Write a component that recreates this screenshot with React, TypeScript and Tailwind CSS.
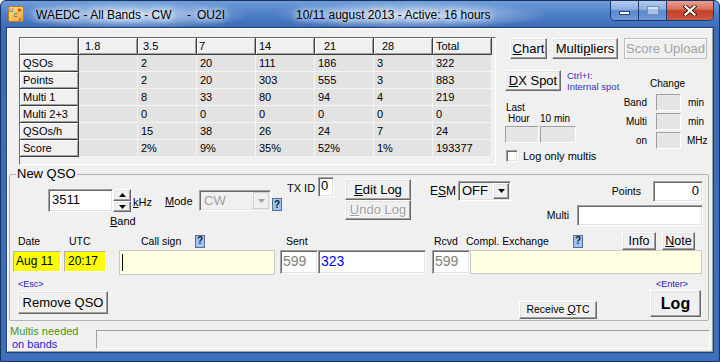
import React from "react";

const raised =
  "border border-t-white border-l-white border-r-[#696969] border-b-[#696969] shadow-[inset_-1px_-1px_0_#a0a0a0,inset_1px_1px_0_#e3e3e3] bg-[#f0f0f0]";
const sunken =
  "border border-t-[#a0a0a0] border-l-[#a0a0a0] border-r-white border-b-white shadow-[inset_1px_1px_0_#696969,inset_-1px_-1px_0_#e3e3e3]";
const flatBox =
  "border border-t-[#a0a0a0] border-l-[#a0a0a0] border-r-white border-b-white bg-[#e6e6e6]";

function Btn({ className = "", children }: { className?: string; children?: React.ReactNode }) {
  return <div className={`${raised} flex items-center justify-center whitespace-nowrap ${className}`}>{children}</div>;
}

function Q({ className = "" }: { className?: string }) {
  return (
    <div
      className={`w-[10px] h-[13px] bg-[#9fc5f0] border border-[#5a6f8c] flex items-center justify-center text-[10px] font-bold leading-none text-[#10204a] ${className}`}
    >
      ?
    </div>
  );
}

function Arrow({ down = true, color = "#000" }: { down?: boolean; color?: string }) {
  return (
    <svg width="7" height="4" viewBox="0 0 7 4">
      <path d={down ? "M0 0 L7 0 L3.5 4Z" : "M0 4 L7 4 L3.5 0Z"} fill={color} />
    </svg>
  );
}

const cols = ["", "1.8", "3.5", "7", "14", "21", "28", "Total"];
const headPad = ["pl-[3px]", "pl-[6px]", "pl-[5px]", "pl-[2px]", "pl-[3px]", "pl-[9px]", "pl-[8px]", "pl-[3px]"];
const rows: [string, string[]][] = [
  ["QSOs", ["", "2", "20", "111", "186", "3", "322"]],
  ["Points", ["", "2", "20", "303", "555", "3", "883"]],
  ["Multi 1", ["", "8", "33", "80", "94", "4", "219"]],
  ["Multi 2+3", ["", "0", "0", "0", "0", "0", "0"]],
  ["QSOs/h", ["", "15", "38", "26", "24", "7", "24"]],
  ["Score", ["", "2%", "9%", "35%", "52%", "1%", "193377"]],
];

const headCell =
  "h-[17px] flex items-center border-r border-b border-r-[#404040] border-b-[#404040] shadow-[inset_1px_1px_0_#fff,inset_-1px_-1px_0_#a0a0a0] bg-[#f0f0f0] whitespace-nowrap overflow-hidden";
const dataCell =
  "h-[17px] flex items-center pl-[3px] border-r border-b border-[#f4f4f4] bg-[#e3e3e3] whitespace-nowrap overflow-hidden";

function ScoreTable() {
  return (
    <div className="w-[477px] h-[128px] border border-t-[#696969] border-l-[#696969] border-r-white border-b-white bg-[#f0f0f0]">
      <div className="grid grid-cols-[repeat(8,59px)] text-[11px] leading-[13px] text-black">
        {cols.map((c, i) => (
          <div key={"h" + i} className={`${headCell} ${headPad[i]}`}>
            {c}
          </div>
        ))}
        {rows.map(([label, vals]) => (
          <React.Fragment key={label}>
            <div className={`${headCell} pl-[3px]`}>{label}</div>
            {vals.map((v, j) => (
              <div key={j} className={dataCell}>
                {v}
              </div>
            ))}
          </React.Fragment>
        ))}
      </div>
    </div>
  );
}

function RightPanel() {
  return (
    <div className="ml-[9px] pt-[1px] flex flex-col">
      <div className="flex h-[21px]">
        <Btn className="ml-[5px] w-[37px] h-[21px] text-[13px]">
          <span className="underline">C</span>hart
        </Btn>
        <Btn className="ml-[5px] w-[66px] h-[21px] text-[13px]">
          Multi<span className="underline">p</span>liers
        </Btn>
        <div className="ml-[6px] w-[83px] h-[21px] border border-[#bdbdbd] shadow-[inset_1px_1px_0_#fff] flex items-center justify-center text-[13px] text-[#a3a3a3] whitespace-nowrap">
          Score Upload
        </div>
      </div>
      <div className="flex mt-[11px]">
        <div className="w-[115px] flex flex-col">
          <div className="flex h-[21px]">
            <Btn className="w-[56px] h-[21px] text-[13px]">
              <span className="underline">D</span>X Spot
            </Btn>
            <div className="ml-[6px] text-[9.5px] leading-[11px] text-[#3a32c0] whitespace-nowrap">
              <div>Ctrl+I:</div>
              <div>Internal spot</div>
            </div>
          </div>
          <div className="mt-[11px] ml-[1px] text-[10px] leading-[11px]">Last</div>
          <div className="flex text-[10px] leading-[11px]">
            <span className="ml-[3px] w-[32px]">Hour</span>
            <span>10 min</span>
          </div>
          <div className="flex mt-[2px]">
            <div className={`${flatBox} w-[34px] h-[17px]`} />
            <div className={`${flatBox} ml-[1px] w-[36px] h-[17px]`} />
          </div>
          <div className="flex items-center mt-[7px] h-[12px]">
            <div className={`${sunken} bg-white ml-[1px] w-[12px] h-[12px]`} />
            <span className="ml-[5px] text-[11px] leading-[12px] whitespace-nowrap">Log only multis</span>
          </div>
        </div>
        <div className="flex flex-col text-[10px] leading-[12px]">
          <span className="ml-[30px] mt-[8px]">Change</span>
          <div className="flex items-center h-[17px] mt-[4px]">
            <span className="w-[27px] text-right">Band</span>
            <div className={`${flatBox} ml-[9px] w-[25px] h-[17px]`} />
            <span className="ml-[7px]">min</span>
          </div>
          <div className="flex items-center h-[17px] mt-[2px]">
            <span className="w-[27px] text-right">Multi</span>
            <div className={`${flatBox} ml-[9px] w-[25px] h-[17px]`} />
            <span className="ml-[7px]">min</span>
          </div>
          <div className="flex items-center h-[17px] mt-[2px]">
            <span className="w-[27px] text-right">on</span>
            <div className={`${flatBox} ml-[9px] w-[25px] h-[17px]`} />
            <span className="ml-[6px]">MHz</span>
          </div>
        </div>
      </div>
    </div>
  );
}

function NewQso() {
  return (
    <fieldset className="ml-[1px] w-[700px] h-[154px] border border-[#b4b4b4] rounded-[2px] px-0 pb-[1px]">
      <legend className="ml-[6px] px-[1px] text-[13px] leading-[14px]">New QSO</legend>
      {/* Row A */}
      <div className="flex items-start h-[51px] -mt-[4px]">
        <div className="ml-[38px] mt-[12px] flex flex-col">
          <div className="flex items-center">
            <div className={`${sunken} bg-white w-[65px] h-[23px] text-[13px] leading-[20px] pl-[3px]`}>3511</div>
            <div className="flex flex-col w-[18px] h-[23px]">
              <div className={`${raised} h-[12px] flex items-center justify-center`}>
                <Arrow down={false} />
              </div>
              <div className={`${raised} h-[11px] flex items-center justify-center`}>
                <Arrow />
              </div>
            </div>
            <span className="ml-[2px] w-[20px] text-[11px] leading-[13px] pt-[3px]">
              <span className="underline">k</span>Hz
            </span>
          </div>
          <span className="ml-[62px] mt-[3px] text-[11px] leading-[13px]">
            <span className="underline">B</span>and
          </span>
        </div>
        <span className="ml-[12px] mt-[18px] w-[28px] text-[11px] leading-[13px]">
          <span className="underline">M</span>ode
        </span>
        <div className={`ml-[6px] mt-[13px] w-[72px] h-[21px] ${sunken} bg-[#f0f0f0] flex p-[1px]`}>
          <span className="flex-1 pl-[3px] text-[13px] leading-[17px] text-[#a0a0a0]">CW</span>
          <div className="w-[16px] h-full border border-[#d0d0d0] bg-[#f0f0f0] flex items-center justify-center">
            <Arrow color="#a0a0a0" />
          </div>
        </div>
        <Q className="ml-[1px] mt-[21px]" />
        <span className="ml-[5px] mt-[5px] w-[27px] text-[11px] leading-[13px] whitespace-nowrap">TX ID</span>
        <div className={`ml-[4px] w-[16px] h-[20px] ${sunken} bg-white text-[13px] leading-[16px] pl-[2px]`}>0</div>
        <div className="ml-[11px] mt-[2px] flex flex-col">
          <Btn className="w-[66px] h-[21px] text-[13px]">
            <span className="underline">E</span>dit Log
          </Btn>
          <Btn className="w-[66px] h-[20px] text-[13px] text-[#a0a0a0] [text-shadow:1px_1px_0_#fff]">
            <span className="underline">U</span>ndo Log
          </Btn>
        </div>
        <span className="ml-[19px] mt-[8px] w-[26px] text-[12px] leading-[13px]">
          E<span className="underline">S</span>M
        </span>
        <div className={`ml-[2px] mt-[4px] w-[53px] h-[20px] ${sunken} bg-[#f0f0f0] flex p-[1px]`}>
          <span className="flex-1 pl-[2px] text-[13px] leading-[16px]">OFF</span>
          <div className={`${raised} w-[16px] h-full flex items-center justify-center`}>
            <Arrow />
          </div>
        </div>
        <div className="ml-auto mr-[5px] mt-[4px] flex flex-col items-end gap-[3px]">
          <div className="flex items-center">
            <span className="text-[10.5px] mr-[12px]">Points</span>
            <div className={`${sunken} bg-white w-[50px] h-[21px] text-[13px] text-right pr-[3px] leading-[18px]`}>0</div>
          </div>
          <div className="flex items-center">
            <span className="text-[10.5px] mr-[8px]">Multi</span>
            <div className={`${sunken} bg-white w-[126px] h-[21px]`} />
          </div>
        </div>
      </div>
      {/* Row B labels */}
      <div className="flex items-center h-[18px] mt-[4px] text-[10.5px] leading-[13px] whitespace-nowrap">
        <span className="ml-[8px] w-[51px]">Date</span>
        <span className="w-[72px]">UTC</span>
        <span className="w-[54px]">Call sign</span>
        <Q />
        <span className="ml-[81px] w-[148px]">Sent</span>
        <span className="w-[32px]">Rcvd</span>
        <span className="w-[107px]">Compl. Exchange</span>
        <Q />
        <Btn className="ml-[39px] w-[34px] h-[18px] text-[12.5px]">Info</Btn>
        <Btn className="ml-[6px] w-[33px] h-[18px] text-[12.5px]">
          <span className="underline">N</span>ote
        </Btn>
      </div>
      {/* Row C fields */}
      <div className="flex items-start h-[25px]">
        <div className="ml-[3px] mt-[1px] w-[48px] h-[21px] bg-[#ffff00] border border-t-[#b0b0b0] border-l-[#b0b0b0] border-r-white border-b-white text-[12px] leading-[18px] pl-[2px]">
          Aug 11
        </div>
        <div className="ml-[3px] mt-[1px] w-[42px] h-[21px] bg-[#ffff00] border border-t-[#b0b0b0] border-l-[#b0b0b0] border-r-white border-b-white text-[12px] leading-[18px] pl-[3px]">
          20:17
        </div>
        <div className="ml-[13px] w-[156px] h-[25px] bg-[#ffffe1] border border-[#c8c8c8] flex items-center pl-[2px]">
          <div className="w-[1px] h-[17px] bg-black" />
        </div>
        <div className={`ml-[5px] w-[38px] h-[24px] ${sunken} bg-white text-[14px] leading-[21px] pl-[2px] text-[#808080]`}>599</div>
        <div className={`w-[108px] h-[24px] ${sunken} bg-white text-[14px] leading-[21px] pl-[2px] text-[#0000ff]`}>323</div>
        <div className={`ml-[6px] w-[38px] h-[24px] ${sunken} bg-white text-[14px] leading-[21px] pl-[2px] text-[#808080]`}>599</div>
        <div className="w-[232px] h-[24px] bg-[#ffffe1] border border-[#c8c8c8]" />
      </div>
      {/* Row D */}
      <div className="flex items-start h-[41px] mt-[3px]">
        <div className="ml-[8px] flex flex-col">
          <span className="text-[9px] leading-[13px] text-[#2020b8]">&lt;Esc&gt;</span>
          <Btn className="w-[90px] h-[23px] text-[13px]">Remove QSO</Btn>
        </div>
        <Btn className="ml-[411px] mt-[23px] w-[78px] h-[18px] text-[10.5px]">
          Receive <span className="underline ml-[3px]">Q</span>TC
        </Btn>
        <div className="ml-[53px] flex flex-col">
          <span className="pl-[6px] text-[9px] leading-[12px] text-[#2020b8]">&lt;Enter&gt;</span>
          <Btn className="w-[51px] h-[27px] text-[16px] font-bold">Log</Btn>
        </div>
      </div>
    </fieldset>
  );
}

function TitleIcon() {
  return (
    <svg width="16" height="16" viewBox="0 0 16 16">
      <defs>
        <linearGradient id="ig" x1="0" y1="0" x2="1" y2="1">
          <stop offset="0" stopColor="#ffe680" />
          <stop offset="1" stopColor="#f0a030" />
        </linearGradient>
      </defs>
      <rect x="0.5" y="0.5" width="15" height="15" rx="2" fill="url(#ig)" stroke="#c07818" />
      <circle cx="11.5" cy="4" r="1.6" fill="#e03020" />
      <text x="1" y="6" fontSize="5.5" fill="#2b3aa8" fontFamily="Liberation Sans, Arial, sans-serif" fontStyle="italic">U</text>
      <text x="5.5" y="10.5" fontSize="5.5" fill="#2b3aa8" fontFamily="Liberation Sans, Arial, sans-serif" fontStyle="italic">C</text>
      <text x="10.5" y="15" fontSize="5.5" fill="#6a2aa8" fontFamily="Liberation Sans, Arial, sans-serif" fontStyle="italic">x</text>
    </svg>
  );
}

function CaptionButtons() {
  return (
    <div className="ml-auto mr-[5px] -mt-[1px] flex h-[21px] border border-t-0 border-[#1d3b70] rounded-b-[5px] overflow-hidden">
      <div className="w-[28px] h-full border-r border-[#1d3b70] [background-image:linear-gradient(180deg,#b9cfee_0%,#8fb0e0_45%,#5d89cb_55%,#6e98d6_100%)] flex items-center justify-center">
        <div className="mt-[5px] w-[11px] h-[4px] bg-white border border-[#2c4270]" />
      </div>
      <div className="w-[28px] h-full border-r border-[#1d3b70] [background-image:linear-gradient(180deg,#b9cfee_0%,#8fb0e0_45%,#5d89cb_55%,#6e98d6_100%)] flex items-center justify-center">
        <div className="w-[12px] h-[9px] border border-[#6f8fc0] bg-[#a9c2e6] shadow-[inset_0_2px_0_#d8e4f4]" />
      </div>
      <div className="w-[46px] h-full [background-image:linear-gradient(180deg,#eaa79a_0%,#d8705c_45%,#c2412a_55%,#cf5a40_100%)] flex items-center justify-center">
        <svg width="14" height="11" viewBox="0 0 14 11">
          <path d="M2.5 1.5 L11.5 9.5 M11.5 1.5 L2.5 9.5" stroke="#4a1a10" strokeWidth="4" strokeLinecap="square" />
          <path d="M2.5 1.5 L11.5 9.5 M11.5 1.5 L2.5 9.5" stroke="#ffffff" strokeWidth="2.2" strokeLinecap="square" />
        </svg>
      </div>
    </div>
  );
}

export default function App() {
  return (
    <div className="w-[720px] h-[362px] bg-white font-['Liberation_Sans',Arial,sans-serif] text-black">
      <div className="w-[720px] h-[362px] flex flex-col border border-[#17325f] rounded-t-[6px] overflow-hidden [background-image:linear-gradient(180deg,#6f9dda_0px,#4b7cc6_14px,#3b6bb7_27px,#3d6fbb_100%)]">
        {/* Title bar */}
        <div className="h-[26px] flex items-start [background-image:radial-gradient(ellipse_120px_14px_at_130px_14px,rgba(214,229,248,0.95),rgba(214,229,248,0)),radial-gradient(ellipse_140px_14px_at_410px_14px,rgba(214,229,248,0.95),rgba(214,229,248,0))]">
          <div className="ml-[7px] mt-[5px]">
            <TitleIcon />
          </div>
          <div className="ml-[12px] mt-[7px] flex text-[12px] leading-[14px] whitespace-nowrap [text-shadow:0_0_6px_#fff,0_0_10px_#fff]">
            <span className="w-[151px]">WAEDC - All Bands - CW</span>
            <span className="w-[10px]">-</span>
            <span className="w-[99px]">OU2I</span>
            <span>10/11 august 2013 - Active: 16 hours</span>
          </div>
          <CaptionButtons />
        </div>
        {/* Body */}
        <div className="flex px-[5px]">
          <div className="w-[708px] h-[326px] border border-[#1f3f77]">
            <div className="w-[706px] h-[324px] border border-t-white border-l-white border-r-[#a0a0a0] border-b-[#a0a0a0] bg-[#f0f0f0] flex flex-col">
              <div className="h-[139px] pt-[8px] pl-[11px] flex items-start">
                <ScoreTable />
                <RightPanel />
              </div>
              <NewQso />
              <div className="flex">
                <div className="pl-[2px] pt-[4px] w-[88px] text-[11px] leading-[13px] whitespace-nowrap">
                  <div className="text-[#3f9622]">Multis needed</div>
                  <div className="text-[#1c1cd8] pl-[2px]">on bands</div>
                </div>
                <div className="mt-[9px] w-[614px] h-[19px] border border-t-[#a0a0a0] border-l-[#a0a0a0] border-r-white border-b-white" />
              </div>
            </div>
          </div>
        </div>
      </div>
    </div>
  );
}
